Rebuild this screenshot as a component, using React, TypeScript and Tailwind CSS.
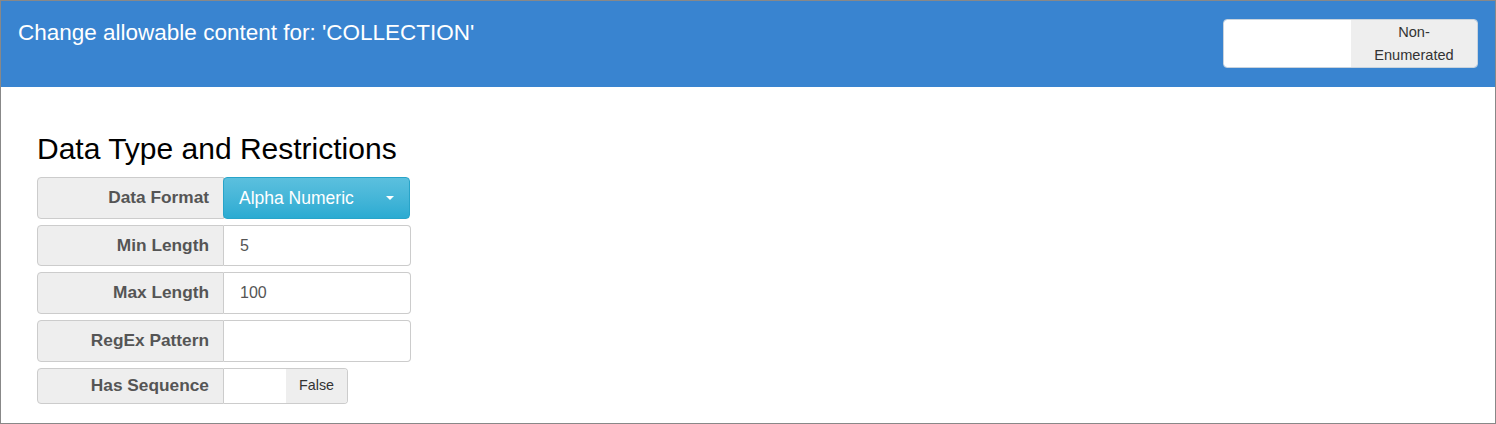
import React from "react";

const rows = [
  { label: "Min Length", value: "5", h: "h-[41px]" },
  { label: "Max Length", value: "100", h: "h-[42px]" },
  { label: "RegEx Pattern", value: "", h: "h-[42px]" },
];

const Label = ({ children }: { children: React.ReactNode }) => (
  <div className="w-[187px] shrink-0 flex items-center justify-end pr-[14px] bg-[#eee] border border-[#ccc] rounded-l-[4px] font-bold text-[17.3px] text-[#555]">
    {children}
  </div>
);

const App = () => {
  return (
    <div
      className="w-[1496px] h-[424px] border border-[#888] overflow-hidden bg-white"
      style={{ fontFamily: '"Liberation Sans", Arial, sans-serif' }}
    >
      <header className="h-[86px] bg-[#3984d0] flex justify-between pl-[17px] pr-[17px]">
        <h1 className="pt-[21px] text-[22.5px] leading-none text-white">
          Change allowable content for: 'COLLECTION'
        </h1>
        <div className="mt-[18px] w-[255px] h-[49px] flex border border-[#c9d3dd] rounded-[4px] overflow-hidden">
          <div className="w-[127px] bg-white" />
          <div className="flex-1 bg-[#eee] flex items-center justify-center text-center text-[14.6px] leading-[23px] text-[#333]">
            Non-
            <br />
            Enumerated
          </div>
        </div>
      </header>

      <main className="px-[36px] pt-[47px]">
        <h2 className="text-[30px] leading-none text-black">Data Type and Restrictions</h2>

        <div className="mt-[13px] flex flex-col gap-[6px]">
          <div className="flex h-[42px]">
            <Label>Data Format</Label>
            <button className="-ml-px w-[187px] flex items-center justify-between px-[15px] bg-linear-to-b from-[#5bc0de] to-[#2aabd2] border border-[#28a4c9] rounded-[4px] text-white text-[17.5px]">
              <span>Alpha Numeric</span>
              <span className="w-0 h-0 border-l-[4px] border-r-[4px] border-t-[4px] border-l-transparent border-r-transparent border-t-white" />
            </button>
          </div>

          {rows.map((r) => (
            <div key={r.label} className={`flex ${r.h}`}>
              <Label>{r.label}</Label>
              <div className="w-[187px] flex items-center pl-[16px] bg-white border border-l-0 border-[#ccc] rounded-r-[4px] text-[16px] text-[#555]">
                {r.value}
              </div>
            </div>
          ))}

          <div className="flex h-[36px]">
            <Label>Has Sequence</Label>
            <div className="w-[124px] flex border border-l-0 border-[#ccc] rounded-r-[4px] overflow-hidden">
              <div className="w-[62px] bg-white" />
              <div className="flex-1 bg-[#eee] flex items-center justify-center text-[14.3px] text-[#333]">
                False
              </div>
            </div>
          </div>
        </div>
      </main>
    </div>
  );
};

export default App;
